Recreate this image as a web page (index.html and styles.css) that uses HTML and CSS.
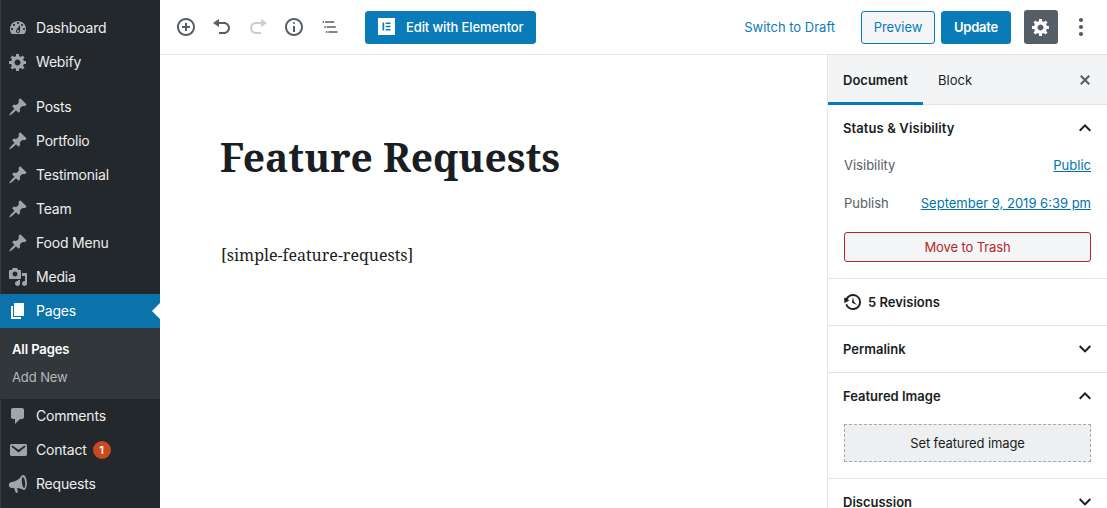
FILE: index.html
```html
<!DOCTYPE html>
<html lang="en">
<head>
<meta charset="utf-8">
<title>Edit Page</title>
<link rel="stylesheet" href="styles.css">
</head>
<body>
<svg class="defs" width="0" height="0">
  <symbol id="gear" viewBox="0 0 20 20"><path d="M18 12h-2.18c-.17.7-.44 1.35-.81 1.93l1.54 1.54-2.1 2.1-1.54-1.54c-.58.36-1.23.63-1.91.79V19H8v-2.18c-.68-.16-1.33-.43-1.91-.79l-1.54 1.54-2.12-2.12 1.54-1.54c-.36-.58-.63-1.23-.79-1.91H1V9.03h2.17c.16-.7.44-1.35.8-1.94L2.43 5.55l2.1-2.1 1.54 1.54c.58-.37 1.24-.64 1.93-.81V2h3v2.18c.68.16 1.33.43 1.91.79l1.54-1.54 2.12 2.12-1.54 1.54c.36.59.64 1.24.8 1.94H18V12zm-8.5 1.5c1.66 0 3-1.34 3-3s-1.34-3-3-3-3 1.34-3 3 1.34 3 3 3z"/></symbol>
  <symbol id="pin" viewBox="0 0 20 20"><path d="M10.44 3.02l1.82-1.82 6.36 6.35-1.83 1.82c-1.05-.68-2.48-.57-3.41.36l-.75.75c-.92.93-1.04 2.35-.35 3.41l-1.83 1.82-2.41-2.41-2.8 2.79c-.42.42-3.38 2.71-3.8 2.29s1.86-3.39 2.28-3.81l2.79-2.79L4.1 9.36l1.83-1.82c1.05.69 2.48.57 3.4-.36l.75-.75c.93-.92 1.05-2.35.36-3.41z"/></symbol>
  <symbol id="up" viewBox="0 0 24 24"><path d="M12 8l-6 6 1.4 1.4 4.6-4.6 4.6 4.6L18 14z"/></symbol>
  <symbol id="down" viewBox="0 0 24 24"><path d="M7.4 8.3l4.6 4.6 4.6-4.6L18 9.700l-6 6-6-6z"/></symbol>
</svg>
<div class="app">
  <nav class="menu">
    <a class="item"><svg viewBox="0 0 20 20"><path d="M3.76 16h12.480c1.100-1.370 1.760-3.110 1.760-5 0-4.420-3.580-8-8-8s-8 3.580-8 8c0 1.890.66 3.630 1.760 5zM10 4c.55 0 1 .45 1 1s-.45 1-1 1-1-.45-1-1 .45-1 1-1zM6 6c.55 0 1 .45 1 1s-.45 1-1 1-1-.45-1-1 .45-1 1-1zm8 0c.55 0 1 .45 1 1s-.45 1-1 1-1-.45-1-1 .45-1 1-1zm-5.370 5.550L12 7v6c0 1.100-.9 2-2 2s-2-.9-2-2c0-.57.24-1.080.63-1.450zM4 10c.55 0 1 .45 1 1s-.45 1-1 1-1-.45-1-1 .45-1 1-1zm12 0c.55 0 1 .45 1 1s-.45 1-1 1-1-.45-1-1 .45-1 1-1zm-5 3c0-.55-.45-1-1-1s-1 .45-1 1 .45 1 1 1 1-.45 1-1z"/></svg><span>Dashboard</span></a>
    <a class="item"><svg><use href="#gear"/></svg><span>Webify</span></a>
    <div class="separator"></div>
    <a class="item"><svg><use href="#pin"/></svg><span>Posts</span></a>
    <a class="item"><svg><use href="#pin"/></svg><span>Portfolio</span></a>
    <a class="item"><svg><use href="#pin"/></svg><span>Testimonial</span></a>
    <a class="item"><svg><use href="#pin"/></svg><span>Team</span></a>
    <a class="item"><svg><use href="#pin"/></svg><span>Food Menu</span></a>
    <a class="item"><svg viewBox="0 0 20 20"><path d="M13 11V4c0-.55-.45-1-1-1h-1.670L9 1H5L3.670 3H2c-.55 0-1 .45-1 1v7c0 .55.45 1 1 1h10c.55 0 1-.45 1-1zM7 4.500c1.380 0 2.500 1.120 2.500 2.500S8.380 9.500 7 9.500 4.500 8.380 4.500 7 5.620 4.500 7 4.500zM14 6h5v10.500c0 1.380-1.120 2.500-2.500 2.500S14 17.880 14 16.500s1.120-2.500 2.500-2.500c.17 0 .34.02.5.05V9h-3V6zm-4 8.050V13h2v3.500c0 1.380-1.120 2.500-2.500 2.500S7 17.880 7 16.500 8.120 14 9.500 14c.17 0 .34.02.5.05z"/></svg><span>Media</span></a>
    <a class="item current"><svg viewBox="0 0 20 20"><path d="M6 15V2h10v13H6zm-1 1h8v2H3V5h2v11z"/></svg><span>Pages</span></a>
    <div class="submenu"><a class="active">All Pages</a><a>Add New</a></div>
    <a class="item"><svg viewBox="0 0 20 20"><path d="M5 2h9c1.100 0 2 .9 2 2v7c0 1.100-.9 2-2 2h-2l-5 5v-5H5c-1.100 0-2-.9-2-2V4c0-1.100.9-2 2-2z"/></svg><span>Comments</span></a>
    <a class="item"><svg viewBox="0 0 20 20"><path d="M3.870 4h13.250C18.370 4 19 4.590 19 5.790v8.420c0 1.190-.63 1.790-1.880 1.790H3.870c-1.250 0-1.880-.6-1.880-1.790V5.790c0-1.200.63-1.790 1.880-1.790zm6.620 8.600l6.740-5.530c.24-.2.43-.66.13-1.070-.29-.41-.82-.42-1.170-.17l-5.700 3.860L4.800 5.830c-.35-.25-.88-.24-1.170.17-.3.41-.11.87.13 1.070z"/></svg><span>Contact</span><b class="count">1</b></a>
    <a class="item"><svg viewBox="0 0 20 20"><path fill-rule="evenodd" d="M15.200 1.100c1.900.2 3.300 3 3.600 6.600.3 4.100-.8 7.900-2.500 8.200-1 .1-3-1.700-7.200-1.900l.7 4.100c0 .5-.6.9-1.200.9-.5 0-.8-.3-1-.8L6.100 14H3.700C2 14 .9 12.800.9 11.100c0-1.800 1-2.900 2.800-3.200 4.700-.8 7.300-2.600 9.200-5.200.7-1 1.400-1.700 2.300-1.600zM14.800 3.100c-.9.200-1.200 2.400-.9 5.200.3 3.100 1.300 5.700 2.200 5.600.9-.1 1.300-2.700 1-5.700-.3-2.900-1.400-5.300-2.300-5.100z"/></svg><span>Requests</span></a>
  </nav>
  <div class="editor">
    <header class="toolbar">
      <div class="tools">
        <svg viewBox="0 0 20 20"><path d="M10 1c-5 0-9 4-9 9s4 9 9 9 9-4 9-9-4-9-9-9zm0 16c-3.900 0-7-3.100-7-7s3.100-7 7-7 7 3.100 7 7-3.100 7-7 7zm1-11H9v3H6v2h3v3h2v-3h3V9h-3V6z"/></svg>
        <svg viewBox="0 0 20 20"><path d="M12 5H7V2L1 6l6 4V7h5c2.200 0 4 1.800 4 4s-1.800 4-4 4H7v2h5c3.300 0 6-2.700 6-6s-2.700-6-6-6z"/></svg>
        <svg class="disabled" viewBox="0 0 20 20"><path d="M8 5h5V2l6 4-6 4V7H8c-2.200 0-4 1.800-4 4s1.800 4 4 4h5v2H8c-3.300 0-6-2.700-6-6s2.700-6 6-6z"/></svg>
        <svg viewBox="0 0 20 20"><path d="M9 15h2V9H9v6zm1-10c-.5 0-1 .5-1 1s.5 1 1 1 1-.5 1-1-.5-1-1-1zm0-4c-5 0-9 4-9 9s4 9 9 9 9-4 9-9-4-9-9-9zm0 16c-3.900 0-7-3.100-7-7s3.100-7 7-7 7 3.100 7 7-3.100 7-7 7z"/></svg>
        <svg class="outline" viewBox="0 0 24 24"><path d="M5 5H3v2h2V5zm3 8h11v-2H8v2zm9-8H6v2h11V5zM7 11H5v2h2v-2zm0 8h2v-2H7v2zm3-2v2h11v-2H10z"/></svg>
      </div>
      <button class="btn primary elementor"><svg viewBox="0 0 17 17"><path fill="#fff" d="M0 0h17v17H0z"/><path fill="#0a7bb9" d="M4.500 4.500h1.700v8H4.500zM7.700 4.500h4.800v1.600H7.700zM7.700 7.700h4.800v1.600H7.700zM7.700 10.900h4.800v1.600H7.700z"/></svg><span>Edit with Elementor</span></button>
      <a class="draft">Switch to Draft</a>
      <button class="btn preview">Preview</button>
      <button class="btn primary update">Update</button>
      <button class="settings"><svg><use href="#gear"/></svg></button>
      <svg class="more" viewBox="0 0 6 20"><circle cx="3" cy="3" r="2.100"/><circle cx="3" cy="10" r="2.100"/><circle cx="3" cy="17" r="2.100"/></svg>
    </header>
    <div class="workspace">
      <main class="content">
        <h1>Feature Requests</h1>
        <p>[simple-feature-requests]</p>
      </main>
      <aside class="inspector">
        <div class="tabs"><a class="tab selected">Document</a><a class="tab">Block</a><svg viewBox="0 0 20 20"><path d="M14.950 6.460L11.410 10l3.540 3.540-1.410 1.410L10 11.420l-3.530 3.530-1.420-1.420L8.580 10 5.050 6.470l1.420-1.420L10 8.580l3.540-3.530z"/></svg></div>
        <section class="status">
          <h2><span class="status-title">Status &amp; Visibility</span><svg><use href="#up"/></svg></h2>
          <div class="row"><span>Visibility</span><a>Public</a></div>
          <div class="row"><span>Publish</span><a>September 9, 2019 6:39 pm</a></div>
          <button class="trash">Move to Trash</button>
        </section>
        <section><h2 class="revisions"><svg viewBox="0 0 20 20"><path d="M13.650 2.880c3.930 2.010 5.480 6.840 3.470 10.770s-6.830 5.480-10.770 3.470c-1.870-.96-3.200-2.560-3.860-4.400l1.640-1.030c.45 1.570 1.520 2.950 3.080 3.760 3.010 1.540 6.690.35 8.230-2.660 1.550-3.010.36-6.690-2.650-8.240C9.780 3.010 6.100 4.200 4.560 7.210l1.880.97-4.950 3.080-.39-5.820 1.780.91C4.900 2.400 9.750.89 13.650 2.880zm-4.360 7.830C9.110 10.530 9 10.280 9 10c0-.07.03-.12.04-.19h-.01L10 5l.97 4.810L14 13l-4.500-2.120.02-.02c-.08-.04-.16-.09-.23-.15z"/></svg><span>5 Revisions</span></h2></section>
        <section><h2><span>Permalink</span><svg><use href="#down"/></svg></h2></section>
        <section class="featured"><h2><span>Featured Image</span><svg><use href="#up"/></svg></h2><button class="image">Set featured image</button></section>
        <section><h2><span>Discussion</span><svg><use href="#down"/></svg></h2></section>
      </aside>
    </div>
  </div>
</div>
</body>
</html>
```
FILE: styles.css
```css
* { box-sizing: border-box; }
body { margin: 0; overflow: hidden; font: 13px Inter, "Liberation Sans", sans-serif; color: #191e23; background: #fff; }
svg { fill: currentColor; flex: none; display: block; }
.defs { position: absolute; }
button { font: inherit; margin: 0; padding: 0; }
.app { display: flex; height: 508px; }

.menu { width: 160px; flex: none; padding-top: 11px; background: #23282d; box-shadow: inset 1px 0 #363b3f; }
.item { display: flex; align-items: center; height: 34px; padding-left: 8px; color: #eee; font-size: 14px; letter-spacing: -.2px; }
.item span { padding-bottom: 2px; }
.item svg { width: 20px; height: 20px; margin-right: 8px; color: #a0a5aa; }
.separator { height: 11px; }
.current { position: relative; background: #0c73aa; color: #fff; }
.current svg { color: #fff; }
.current::after { content: ""; position: absolute; right: 0; top: 9px; border: 8px solid transparent; border-right-color: #fff; border-left: 0; }
.submenu { height: 71px; padding: 7px 12px; background: #32373c; color: #b4b9be; letter-spacing: -.1px; }
.submenu a { display: block; height: 28px; line-height: 28px; }
.submenu .active { color: #fff; font-weight: 600; }
.count { width: 18px; height: 18px; margin-left: 6px; border-radius: 50%; background: #ca4a1f; color: #fff; font-size: 11px; font-weight: 600; line-height: 18px; text-align: center; letter-spacing: 0; }

.editor { flex: 1; min-width: 0; display: flex; flex-direction: column; }
.toolbar { height: 55px; flex: none; display: flex; align-items: center; padding: 0 23px 0 16px; border-bottom: 1px solid #e2e4e7; color: #555d66; }
.tools { display: flex; gap: 16px; }
.tools svg { width: 20px; height: 20px; }
.tools .disabled { opacity: .3; }
.btn { height: 33px; border: 1px solid #0a7bb9; border-radius: 3px; }
.primary { background: #0a7bb9; color: #fff; }
.elementor { width: 171px; display: flex; align-items: center; gap: 11px; margin-left: 25px; padding-left: 12px; font-weight: 500; letter-spacing: -.12px; white-space: nowrap; }
.elementor svg { width: 17px; height: 17px; margin-top: -1px; }
.draft { margin-left: auto; margin-right: 26px; color: #0a7bb9; }
.preview { width: 74px; background: #f3f5f7; color: #0a7bb9; }
.update { width: 70px; margin-left: 6px; font-weight: 600; letter-spacing: -.2px; }
.settings { width: 34px; height: 34px; margin-left: 13px; border: 0; border-radius: 3px; background: #555d66; color: #fff; display: grid; place-items: center; }
.settings svg { width: 20px; height: 20px; }
.more { width: 6px; height: 20px; margin-left: 20px; }

.workspace { flex: 1; min-height: 0; display: flex; }
.content { flex: 1; padding: 74px 0 0 60px; font-family: "Noto Serif", "Droid Serif", "DejaVu Serif Condensed", "DejaVu Serif", serif; }
.content h1 { margin: 0; font-size: 39px; line-height: 55px; font-weight: 700; white-space: nowrap; }
.content p { margin: 57px 0 0 1px; font-size: 16px; line-height: 28px; }

.inspector { width: 280px; flex: none; border-left: 1px solid #e2e4e7; }
.tabs { display: flex; height: 50px; background: #f3f4f5; border-bottom: 1px solid #e2e4e7; align-items: stretch; }
.tab { padding: 0 16px 0 15px; line-height: 51px; }
.tab.selected { width: 95px; font-weight: 600; box-shadow: inset 0 -3px #007cba; height: 50px; }
.tabs svg { width: 20px; height: 20px; margin: 15px 12px 0 auto; color: #555d66; }
section { height: 47px; padding: 0 16px 0 15px; border-bottom: 1px solid #e2e4e7; }
h2 { display: flex; align-items: center; justify-content: space-between; height: 46px; margin: 0; font-size: 13px; font-weight: 600; }
h2 svg { width: 24px; height: 24px; margin-right: -6px; }
.status { height: 174px; }
.status-title { letter-spacing: .1px; }
.row { display: flex; justify-content: space-between; height: 38px; padding: 6px 0 0 1px; line-height: 16px; color: #555d66; }
.row a { color: #0073aa; text-decoration: underline; }
.trash { display: block; width: 247px; height: 30px; margin: 5px 0 0 1px; border: 1px solid #b52727; border-radius: 3px; background: #f3f5f7; color: #b52727; letter-spacing: -.1px; }
.revisions { justify-content: flex-start; }
.revisions svg { width: 20px; height: 20px; margin: 0 5px 0 0; }
.featured { height: 106px; }
.image { display: block; width: 247px; height: 38px; margin: 5px 0 0 1px; border: 1px dashed #a2aab2; background: #edeff0; color: #191e23; letter-spacing: -.1px; }
```
